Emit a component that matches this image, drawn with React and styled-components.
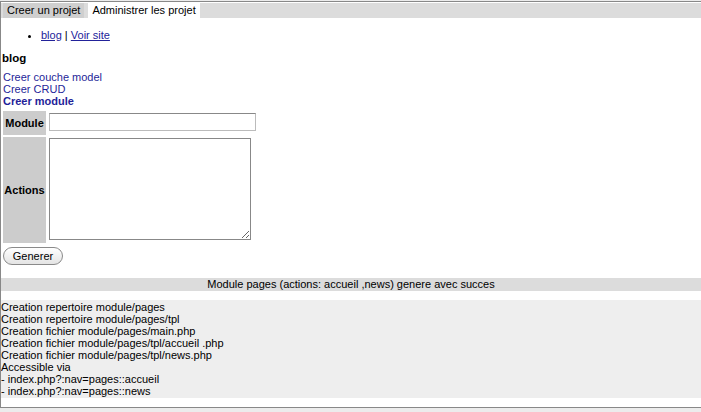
import React from 'react';
import styled, {createGlobalStyle} from 'styled-components';

const GlobalStyle = createGlobalStyle`
    html, body {
        margin: 0;
        padding: 0;
        background: #ececec;
    }
    body {
        font-family: "Liberation Sans", Arial, sans-serif;
        font-size: 11px;
        color: #000;
    }
`;

const Frame = styled.div`
    box-sizing: border-box;
    margin-top: 1px;
    height: 407px;
    background: #fff;
    border: 1px solid #888;
    border-right: none;
    overflow: hidden;
`;

const TabBar = styled.div`
    display: flex;
    gap: 4px;
    margin-top: 1px;
    padding-left: 2px;
    height: 15px;
    background: #dcdcdc;
`;

const Tab = styled.div`
    padding: 0 4px;
    line-height: 15px;
    background: ${({$active}) => ($active ? '#fff' : '#cfcfcf')};
`;

const NavList = styled.ul`
    margin: 11px 0 0;
    padding-left: 40px;
    line-height: 12px;
`;

const NavLink = styled.a`
    color: #22229a;
    text-decoration: underline;
`;

const Title = styled.div`
    margin-top: 11px;
    font-size: 11.5px;
    font-weight: bold;
    line-height: 12px;
    padding-left: 1px;
`;

const Menu = styled.div`
    display: flex;
    flex-direction: column;
    margin-top: 7px;
    padding-left: 2px;
`;

const MenuLink = styled.a`
    color: #1f1f99;
    text-decoration: none;
    line-height: 12px;
    font-weight: ${({$current}) => ($current ? 'bold' : 'normal')};
`;

const FormGrid = styled.div`
    display: grid;
    grid-template-columns: 43px 210px;
    grid-template-rows: 24px 106px;
    gap: 2px 3px;
    padding: 2px;
    margin-top: 2px;
`;

const Label = styled.div`
    display: flex;
    align-items: center;
    justify-content: center;
    background: #cccccc;
    font-weight: bold;
`;

const Field = styled.div`
    padding-top: ${({$top}) => $top}px;
`;

const TextInput = styled.input`
    box-sizing: border-box;
    display: block;
    width: 207px;
    height: 18px;
    margin: 0;
    border: 1px solid #bbb;
    border-top-color: #888;
    font: inherit;
`;

const TextBox = styled.textarea`
    box-sizing: border-box;
    display: block;
    width: 202px;
    height: 102px;
    margin: 0;
    border: 1px solid #888;
    font: inherit;
`;

const Button = styled.button`
    display: block;
    box-sizing: border-box;
    margin: 2px 0 0 2px;
    width: 60px;
    height: 18px;
    padding: 0;
    border: 1px solid #8a8a8a;
    border-radius: 9px;
    background: linear-gradient(#ffffff, #e4e4e4);
    font-family: "Liberation Sans", Arial, sans-serif;
    font-size: 11px;
    color: #000;
`;

const Notice = styled.div`
    margin-top: 13px;
    height: 13px;
    line-height: 13px;
    background: #dcdcdc;
    text-align: center;
`;

const Log = styled.div`
    margin-top: 9px;
    padding: 1px 0;
    background: #eeeeee;
    line-height: 12px;
`;

const logLines = [
    'Creation repertoire module/pages',
    'Creation repertoire module/pages/tpl',
    'Creation fichier module/pages/main.php',
    'Creation fichier module/pages/tpl/accueil .php',
    'Creation fichier module/pages/tpl/news.php',
    'Accessible via',
    '- index.php?:nav=pages::accueil',
    '- index.php?:nav=pages::news',
];

export default function App() {
    return (
        <>
            <GlobalStyle/>
            <Frame>
                <TabBar>
                    <Tab>Creer un projet</Tab>
                    <Tab $active>Administrer les projet</Tab>
                </TabBar>

                <NavList>
                    <li>
                        <NavLink href="#">blog</NavLink> | <NavLink href="#">Voir site</NavLink>
                    </li>
                </NavList>

                <Title>blog</Title>

                <Menu>
                    <MenuLink href="#">Creer couche model</MenuLink>
                    <MenuLink href="#">Creer CRUD</MenuLink>
                    <MenuLink href="#" $current>Creer module</MenuLink>
                </Menu>

                <FormGrid>
                    <Label>Module</Label>
                    <Field $top={2}><TextInput type="text"/></Field>
                    <Label>Actions</Label>
                    <Field $top={1}><TextBox/></Field>
                </FormGrid>
                <Button>Generer</Button>

                <Notice>Module pages (actions: accueil ,news) genere avec succes</Notice>

                <Log>
                    {logLines.map(line => (
                        <div key={line}>{line}</div>
                    ))}
                </Log>
            </Frame>
        </>
    );
}
